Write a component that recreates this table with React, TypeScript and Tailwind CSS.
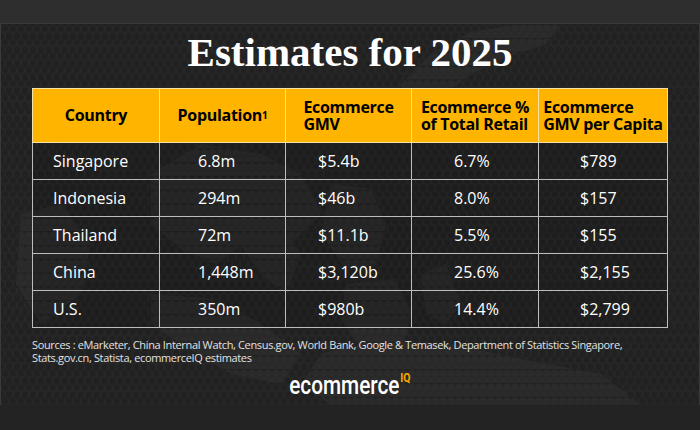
import React from "react";

const rows = [
  ["Singapore", "6.8m", "$5.4b", "6.7%", "$789"],
  ["Indonesia", "294m", "$46b", "8.0%", "$157"],
  ["Thailand", "72m", "$11.1b", "5.5%", "$155"],
  ["China", "1,448m", "$3,120b", "25.6%", "$2,155"],
  ["U.S.", "350m", "$980b", "14.4%", "$2,799"],
];

const pads = ["pl-[20px]", "pl-[38px]", "pl-[32px]", "pl-[42px]", "pl-[41px]"];

function HexBackground() {
  const r = 4.6;
  const w = Math.sqrt(3) * r;
  const h = 1.5 * r;
  const hex = (cx: number, cy: number) =>
    Array.from({ length: 6 }, (_, i) => {
      const a = (Math.PI / 180) * (60 * i - 90);
      return `${(cx + (r - 0.6) * Math.cos(a)).toFixed(2)},${(cy + (r - 0.6) * Math.sin(a)).toFixed(2)}`;
    }).join(" ");
  return (
    <svg className="absolute inset-0 h-full w-full" width="698" height="381" aria-hidden="true">
      <defs>
        <pattern id="hexline" width={w} height={h * 2} patternUnits="userSpaceOnUse">
          <polygon points={hex(w / 2, r)} fill="none" stroke="#292929" strokeWidth="0.7" />
          <polygon points={hex(0, r + h)} fill="none" stroke="#292929" strokeWidth="0.7" />
          <polygon points={hex(w, r + h)} fill="none" stroke="#292929" strokeWidth="0.7" />
        </pattern>
        <pattern id="hexfill" width={w} height={h * 2} patternUnits="userSpaceOnUse">
          <polygon points={hex(w / 2, r)} fill="#2b2b2b" />
          <polygon points={hex(0, r + h)} fill="#2b2b2b" />
          <polygon points={hex(w, r + h)} fill="#2b2b2b" />
        </pattern>
      </defs>
      <rect width="100%" height="100%" fill="url(#hexline)" />
      <g fill="url(#hexfill)">
        <path d="M400 60 L430 30 L470 8 L520 0 L560 0 L545 20 L500 35 L470 50 L445 70 L425 90 L405 90 Z" />
        <path d="M150 150 L200 120 L260 130 L300 150 L320 190 L290 220 L250 215 L215 240 L180 225 L150 200 Z" />
        <path d="M240 180 L275 190 L300 230 L285 270 L260 250 L235 215 Z" />
        <path d="M330 160 L370 165 L385 200 L375 240 L345 245 L320 210 Z" />
        <path d="M345 260 L395 255 L410 290 L400 330 L360 325 L340 295 Z" />
        <path d="M20 190 L60 180 L90 220 L80 270 L40 300 L15 260 Z" />
        <path d="M150 270 L215 275 L260 300 L300 330 L280 360 L230 350 L180 320 L150 300 Z" />
        <path d="M320 330 L380 315 L450 320 L520 335 L600 350 L640 381 L330 381 L300 360 Z" />
        <path d="M420 250 L445 240 L460 280 L445 300 L425 290 Z" />
      </g>
    </svg>
  );
}

export default function App() {
  return (
    <div className="flex h-[430px] w-[700px] flex-col bg-[#2e2e2e] font-['Open_Sans',sans-serif]">
      <div className="h-[23px] shrink-0" />
      <div className="relative h-[382px] shrink-0 border-l border-r border-t border-[#3a3a3a] bg-[#212121]">
        <HexBackground />
        <div className="relative flex flex-col items-center">
          <h1 className="mt-[8px] font-['Liberation_Serif',serif] text-[41px] font-bold leading-[40px] text-white">
            Estimates for 2025
          </h1>
          <table className="mt-[16px] table-fixed border-collapse text-left">
            <colgroup>
              <col className="w-[127px]" />
              <col className="w-[126px]" />
              <col className="w-[126px]" />
              <col className="w-[127px]" />
              <col className="w-[129px]" />
            </colgroup>
            <thead>
              <tr className="h-[54px] bg-[#ffb400] text-[16px] font-bold leading-[17px] tracking-[-0.3px] text-black">
                <th className="border border-[#f4e0a8] p-0 text-center font-bold">Country</th>
                <th className="border border-[#f4e0a8] p-0 text-center font-bold">
                  Population<sup className="relative -top-[2px] text-[10px]">1</sup>
                </th>
                <th className="border border-[#f4e0a8] p-0 text-center font-bold">
                  <span className="inline-block text-left">Ecommerce<br />GMV</span>
                </th>
                <th className="border border-[#f4e0a8] p-0 text-center font-bold">
                  <span className="inline-block text-left">Ecommerce %<br />of Total Retail</span>
                </th>
                <th className="border border-[#f4e0a8] p-0 text-center font-bold">
                  <span className="inline-block text-left">Ecommerce<br />GMV per Capita</span>
                </th>
              </tr>
            </thead>
            <tbody>
              {rows.map((row, i) => (
                <tr key={i} className="h-[37px] bg-black/10 text-[16px] leading-[20px] text-white">
                  {row.map((cell, j) => (
                    <td key={j} className={`border border-[#bdbdbd] py-0 ${pads[j]}`}>
                      {cell}
                    </td>
                  ))}
                </tr>
              ))}
            </tbody>
          </table>
          <p className="mt-[10px] w-[636px] whitespace-nowrap text-[11px] leading-[13px] tracking-[-0.35px] text-[#e2e2e2]">
            Sources : eMarketer, China Internal Watch, Census.gov, World Bank, Google &amp; Temasek, Department of Statistics Singapore,
            <br />
            Stats.gov.cn, Statista, ecommerceIQ estimates
          </p>
          <div className="mt-[6px] flex justify-center">
            <span className="inline-flex origin-center scale-x-[0.8] items-start font-['Roboto',sans-serif] text-[26px] font-medium leading-[30px] text-white">
              ecommerce
              <span className="ml-[1px] mt-[1px] text-[13px] font-bold leading-[13px] text-[#f7a800]">IQ</span>
            </span>
          </div>
        </div>
      </div>
      <div className="flex-1 bg-[#232323]" />
    </div>
  );
}
